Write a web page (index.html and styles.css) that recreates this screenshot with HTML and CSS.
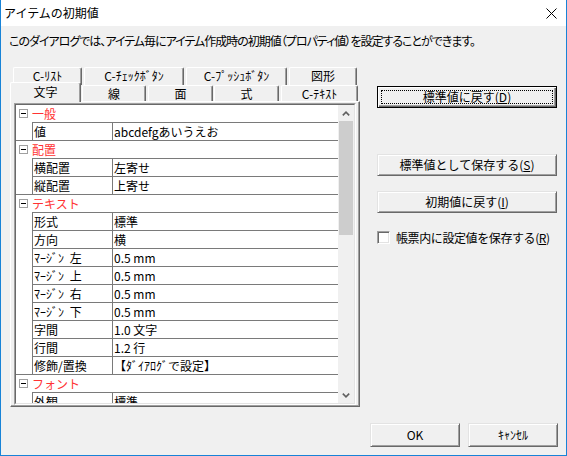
FILE: index.html
```html
<!DOCTYPE html>
<html lang="ja">
<head>
<meta charset="utf-8">
<title>アイテムの初期値</title>
<link rel="stylesheet" href="styles.css">
</head>
<body>
<div class="window">
  <div class="titlebar">
    <span class="title">アイテムの初期値</span>
    <svg class="close" width="11" height="11" viewBox="0 0 11 11"><path d="M0.5 0.5 L10.5 10.5 M10.5 0.5 L0.5 10.5" stroke="#000" stroke-width="1" fill="none"/></svg>
  </div>
  <div class="content">
    <p class="desc">このダイアログでは、アイテム毎にアイテム作成時の初期値（プロパティ値）を設定することができます。</p>
    <div class="main">
      <div class="tabctl">
        <div class="tabrow row1">
          <div class="tab t-list">C-ﾘｽﾄ</div>
          <div class="tab t-check">C-ﾁｪｯｸﾎﾞﾀﾝ</div>
          <div class="tab t-push">C-ﾌﾟｯｼｭﾎﾞﾀﾝ</div>
          <div class="tab t-fig">図形</div>
        </div>
        <div class="tabrow row2">
          <div class="tab sel t-moji">文字</div>
          <div class="tab t-sen">線</div>
          <div class="tab t-men">面</div>
          <div class="tab t-shiki">式</div>
          <div class="tab t-text">C-ﾃｷｽﾄ</div>
        </div>
        <div class="panel">
          <div class="grid">
            <div class="gridin">
              <div class="rows">
                <div class="group">
                  <div class="ghead"><span class="gutter"><span class="exp"></span></span><span class="glabel">一般</span></div>
                  <div class="prow"><span class="pname">値</span><span class="pval">abcdefgあいうえお</span></div>
                </div>
                <div class="group">
                  <div class="ghead"><span class="gutter"><span class="exp"></span></span><span class="glabel">配置</span></div>
                  <div class="prow"><span class="pname">横配置</span><span class="pval">左寄せ</span></div>
                  <div class="prow"><span class="pname">縦配置</span><span class="pval">上寄せ</span></div>
                </div>
                <div class="group">
                  <div class="ghead"><span class="gutter"><span class="exp"></span></span><span class="glabel">テキスト</span></div>
                  <div class="prow"><span class="pname">形式</span><span class="pval">標準</span></div>
                  <div class="prow"><span class="pname">方向</span><span class="pval">横</span></div>
                  <div class="prow"><span class="pname">ﾏｰｼﾞﾝ 左</span><span class="pval">0.5 mm</span></div>
                  <div class="prow"><span class="pname">ﾏｰｼﾞﾝ 上</span><span class="pval">0.5 mm</span></div>
                  <div class="prow"><span class="pname">ﾏｰｼﾞﾝ 右</span><span class="pval">0.5 mm</span></div>
                  <div class="prow"><span class="pname">ﾏｰｼﾞﾝ 下</span><span class="pval">0.5 mm</span></div>
                  <div class="prow"><span class="pname">字間</span><span class="pval">1.0 文字</span></div>
                  <div class="prow"><span class="pname">行間</span><span class="pval">1.2 行</span></div>
                  <div class="prow"><span class="pname">修飾/置換</span><span class="pval">【ﾀﾞｲｱﾛｸﾞで設定】</span></div>
                </div>
                <div class="group">
                  <div class="ghead"><span class="gutter"><span class="exp"></span></span><span class="glabel">フォント</span></div>
                  <div class="prow"><span class="pname">外観</span><span class="pval">標準</span></div>
                </div>
              </div>
              <div class="vscroll">
                <div class="sarrow"><svg width="8" height="5" viewBox="0 0 8 5"><polyline points="0.8,4.4 4,1.2 7.2,4.4" fill="none" stroke="#606060" stroke-width="1.6"/></svg></div>
                <div class="thumb"></div>
                <div class="strack"></div>
                <div class="sarrow"><svg width="8" height="5" viewBox="0 0 8 5"><polyline points="0.8,0.6 4,3.8 7.2,0.6" fill="none" stroke="#606060" stroke-width="1.6"/></svg></div>
              </div>
            </div>
          </div>
        </div>
      </div>
      <div class="side">
        <div class="btn default side1"><span class="focus">標準値に戻す(<u>D</u>)</span></div>
        <div class="btn side2">標準値として保存する(<u>S</u>)</div>
        <div class="btn side3">初期値に戻す(<u>I</u>)</div>
        <label class="check"><span class="cbox"></span><span class="clabel">帳票内に設定値を保存する(<u>R</u>)</span></label>
      </div>
    </div>
    <div class="footer">
      <div class="btn fbtn">OK</div>
      <div class="btn fbtn">ｷｬﾝｾﾙ</div>
    </div>
  </div>
</div>
</body>
</html>
```

FILE: styles.css
```css
* { box-sizing: border-box; }
html, body { margin: 0; padding: 0; }
body {
  width: 567px;
  height: 456px;
  overflow: hidden;
  background: #f0f0f0;
  font-family: "Noto Sans CJK JP", "Noto Sans", sans-serif;
  font-size: 12px;
  color: #000;
}
.window {
  width: 567px;
  height: 456px;
  border: 1px solid #1883d7;
  border-top: none;
  display: flex;
  flex-direction: column;
  background: #f0f0f0;
}
.titlebar {
  height: 26px;
  flex: none;
  background: #fff;
  display: flex;
  align-items: center;
  justify-content: space-between;
  padding: 0 9px 0 3px;
}
.title { line-height: 14px; }
.close { display: block; }
.content {
  flex: 1;
  display: flex;
  flex-direction: column;
  padding: 0 8px 0 9px;
}
.desc {
  margin: 8px 0 0 -1px;
  line-height: 14px;
  height: 14px;
  white-space: nowrap;
  font-feature-settings: "palt";
  letter-spacing: -1px;
}
.main {
  display: flex;
  margin-top: 19px;
}
.tabctl {
  width: 350px;
  display: flex;
  flex-direction: column;
}
.tabrow { display: flex; }
.row1 { height: 18px; padding-left: 3px; gap: 2px; }
.row2 { height: 16px; }
.tab {
  background: #f0f0f0;
  border-top: 1px solid #fff;
  border-left: 1px solid #fff;
  border-right: 1px solid #696969;
  box-shadow: inset -1px 0 #a0a0a0;
  border-radius: 2px 2px 0 0;
  text-align: center;
  white-space: nowrap;
}
.row1 .tab { height: 18px; line-height: 16px; }
.row2 .tab { height: 16px; line-height: 15px; }
.row2 .tab.sel {
  height: 20px;
  margin-top: -3px;
  padding-top: 1px;
  line-height: 15px;
  position: relative;
  z-index: 2;
}
.t-list { width: 69px; }
.t-check { width: 100px; }
.t-push { width: 101px; }
.t-fig { width: 68px; }
.t-moji { width: 71px; }
.t-sen { width: 64px; margin-left: 1px; }
.t-men { width: 65px; margin-left: 2px; }
.t-shiki { width: 65px; margin-left: 1px; }
.t-text { width: 77px; margin-left: 2px; }
.panel {
  height: 306px;
  border: 1px solid;
  border-color: #fff #696969 #696969 #fff;
  box-shadow: inset -1px -1px #a0a0a0;
  padding: 1px 3px 1px 3px;
}
.grid {
  height: 100%;
  border: 1px solid;
  border-color: #a0a0a0 #fff #fff #a0a0a0;
}
.gridin {
  height: 100%;
  border: 1px solid;
  border-color: #696969 #e3e3e3 #e3e3e3 #696969;
  display: flex;
  background: #fff;
}
.rows {
  flex: 1;
  overflow: hidden;
  background: #fff;
}
.group { border-bottom: 1px solid #7a7a7a; }
.ghead {
  display: flex;
  height: 18px;
}
.gutter {
  width: 16px;
  flex: none;
  display: flex;
  align-items: center;
  padding-left: 3px;
  padding-bottom: 1px;
}
.exp {
  width: 9px;
  height: 9px;
  border: 1px solid #a0a0a0;
  background: #fff;
  position: relative;
}
.exp::after {
  content: "";
  position: absolute;
  left: 1px;
  top: 3px;
  width: 5px;
  height: 1px;
  background: #000;
}
.glabel {
  flex: 1;
  border-bottom: 1px solid #7a7a7a;
  color: #ff3333;
  line-height: 17px;
}
.prow {
  display: flex;
  height: 18px;
  margin-left: 16px;
  border-left: 1px solid #7a7a7a;
  border-bottom: 1px solid #7a7a7a;
  line-height: 17px;
  white-space: nowrap;
}
.prow:last-child {
  height: 17px;
  border-bottom: none;
}
.pname {
  width: 80px;
  flex: none;
  border-right: 1px solid #7a7a7a;
  padding-left: 1px;
  overflow: hidden;
  word-spacing: 3px;
}
.pval {
  flex: 1;
  padding-left: 1px;
  overflow: hidden;
}
.vscroll {
  width: 16px;
  flex: none;
  background: #f0f0f0;
  display: flex;
  flex-direction: column;
}
.sarrow {
  height: 16px;
  flex: none;
  display: flex;
  align-items: center;
  justify-content: center;
}
.sarrow svg { display: block; }
.thumb {
  height: 114px;
  margin: 0 1px;
  background: #cdcdcd;
}
.strack { flex: 1; }
.side {
  width: 180px;
  margin-left: 17px;
  padding-top: 19px;
  display: flex;
  flex-direction: column;
}
.btn {
  background: #f0f0f0;
  border: 1px solid;
  border-color: #e3e3e3 #696969 #696969 #e3e3e3;
  box-shadow: inset 1px 1px #fff, inset -1px -1px #a0a0a0;
  display: flex;
  align-items: center;
  justify-content: center;
  white-space: nowrap;
  height: 22px;
  line-height: 14px;
}
.btn u { text-underline-offset: 1px; }
.btn.default {
  border: 1px solid #000;
  box-shadow: inset 1px 1px #fff, inset -1px -1px #696969, inset -2px -2px #a0a0a0;
  padding: 3px;
}
.focus {
  flex: 1;
  align-self: stretch;
  border: 1px dotted #000;
  display: flex;
  align-items: center;
  justify-content: center;
}
.side2 { margin-top: 46px; }
.side3 { margin-top: 15px; }
.check {
  margin-top: 18px;
  display: flex;
  align-items: center;
  height: 13px;
}
.cbox {
  width: 13px;
  height: 13px;
  flex: none;
  background: #fff;
  border: 1px solid;
  border-color: #a0a0a0 #fff #fff #a0a0a0;
  box-shadow: inset 1px 1px #696969, inset -1px -1px #e3e3e3;
}
.clabel {
  margin-left: 6px;
  line-height: 14px;
  white-space: nowrap;
  letter-spacing: -0.4px;
}
.footer {
  display: flex;
  justify-content: flex-end;
  gap: 8px;
  margin-top: 16px;
}
.fbtn {
  width: 90px;
  height: 24px;
}
```
